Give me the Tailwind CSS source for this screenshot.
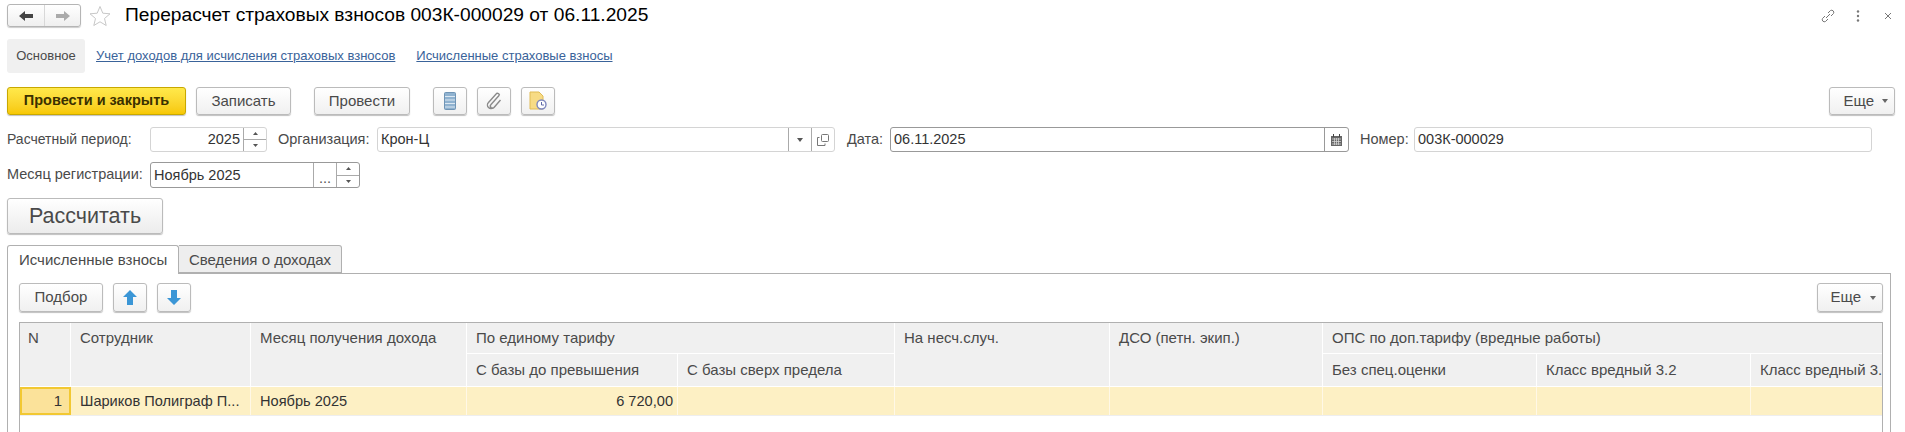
<!DOCTYPE html>
<html lang="ru">
<head>
  <meta charset="UTF-8" />
  <title>Перерасчет страховых взносов</title>
  <script src="https://cdn.jsdelivr.net/npm/@tailwindcss/browser@4"></script>
</head>
<body class="bg-white h-[432px] overflow-hidden font-['Liberation_Sans',Arial,sans-serif] text-[15px] text-[#4a4a4a]">

  <!-- title bar -->
  <div class="flex items-center h-[23px] mt-[4px] pl-[7px] pr-[13px]">
    <div class="flex w-[74px] h-[23px] border border-[#b5b5b5] rounded-[3px] bg-linear-to-b from-white to-[#efefef] shadow-[0_1px_1px_rgba(0,0,0,0.2)]">
      <div class="w-[37px] flex items-center justify-center border-r border-[#d8d8d8]">
        <svg width="14" height="10" viewBox="0 0 14 10"><path d="M0 5 L6 0 V3 H14 V7 H6 V10 Z" fill="#444"/></svg>
      </div>
      <div class="flex-1 flex items-center justify-center">
        <svg width="14" height="10" viewBox="0 0 14 10"><path d="M14 5 L8 0 V3 H0 V7 H8 V10 Z" fill="#aaa"/></svg>
      </div>
    </div>
    <svg class="ml-[8px]" width="22" height="22" viewBox="0 0 22 22"><path d="M11 1.5 L13.8 8.2 L21 8.8 L15.5 13.5 L17.2 20.5 L11 16.8 L4.8 20.5 L6.5 13.5 L1 8.8 L8.2 8.2 Z" fill="none" stroke="#c8c8c8"/></svg>
    <h1 class="ml-[14px] text-[19.2px] text-black whitespace-nowrap">Перерасчет страховых взносов 003К-000029 от 06.11.2025</h1>
    <div class="ml-auto flex items-center">
      <svg width="16" height="16" viewBox="0 0 16 16" fill="none" stroke="#777" stroke-width="1"><path d="M6 10 L10 6"/><path d="M8 5 L10.5 2.5 a2.2 2.2 0 0 1 3 3 L11 8"/><path d="M8 11 L5.5 13.5 a2.2 2.2 0 0 1 -3 -3 L5 8"/></svg>
      <svg class="ml-[20px]" width="4" height="14" viewBox="0 0 4 14" fill="#777"><circle cx="2" cy="2.5" r="1.2"/><circle cx="2" cy="7" r="1.2"/><circle cx="2" cy="11.5" r="1.2"/></svg>
      <svg class="ml-[24px]" width="8" height="8" viewBox="0 0 8 8" stroke="#777"><path d="M1 1 L7 7 M7 1 L1 7"/></svg>
    </div>
  </div>

  <!-- section links -->
  <div class="flex items-center h-[34px] mt-[12px] pl-[7px] text-[13px]">
    <div class="w-[78px] h-full flex items-center justify-center bg-[#f0f0f0] rounded-[3px] text-[#4a4a4a]">Основное</div>
    <a class="ml-[11px] text-[#3a639a] underline whitespace-nowrap">Учет доходов для исчисления страховых взносов</a>
    <a class="ml-[21px] text-[#3a639a] underline whitespace-nowrap">Исчисленные страховые взносы</a>
  </div>

  <!-- command bar -->
  <div class="flex items-center h-[28px] mt-[14px] pl-[7px] pr-[10px]">
    <button class="w-[179px] h-full rounded-[3px] border border-[#c8a800] bg-linear-to-b from-[#ffe94a] to-[#f7c800] font-bold text-[14.5px] text-[#3a3000] shadow-[0_1px_1px_rgba(0,0,0,0.25)]">Провести и закрыть</button>
    <button class="ml-[10px] w-[95px] h-full rounded-[3px] border border-[#bbb] bg-linear-to-b from-white to-[#f0f0f0] shadow-[0_1px_1px_rgba(0,0,0,0.25)]">Записать</button>
    <button class="ml-[23px] w-[96px] h-full rounded-[3px] border border-[#bbb] bg-linear-to-b from-white to-[#f0f0f0] shadow-[0_1px_1px_rgba(0,0,0,0.25)]">Провести</button>
    <button class="ml-[23px] w-[34px] h-full flex items-center justify-center rounded-[3px] border border-[#bbb] bg-linear-to-b from-white to-[#f0f0f0] shadow-[0_1px_1px_rgba(0,0,0,0.25)]">
      <svg width="12" height="18" viewBox="0 0 12 18"><rect x="0.5" y="0.5" width="11" height="17" rx="1" fill="#8fb2d0" stroke="#6f94b5"/><path d="M1 4.5 H11 M1 8 H11 M1 11.5 H11 M1 15 H11" stroke="#dce8f2"/></svg>
    </button>
    <button class="ml-[10px] w-[34px] h-full flex items-center justify-center rounded-[3px] border border-[#bbb] bg-linear-to-b from-white to-[#f0f0f0] shadow-[0_1px_1px_rgba(0,0,0,0.25)]">
      <svg width="16" height="18" viewBox="0 0 16 18" fill="none" stroke="#8a8a8a" stroke-width="1.4"><path d="M13.5 3 L5 12.5 a2.1 2.1 0 0 0 3 3 L14.5 8 M13.5 3 a2.2 2.2 0 0 0 -3 -1.5 L2.5 10.5 a3.4 3.4 0 0 0 5 5"/></svg>
    </button>
    <button class="ml-[10px] w-[34px] h-full flex items-center justify-center rounded-[3px] border border-[#bbb] bg-linear-to-b from-white to-[#f0f0f0] shadow-[0_1px_1px_rgba(0,0,0,0.25)]">
      <svg width="20" height="20" viewBox="0 0 20 20"><path d="M2 1 H11 L15 5 V18 H2 Z" fill="#f7db85" stroke="#e0bb55"/><circle cx="13.5" cy="13.5" r="4.5" fill="#fff" stroke="#7d86bd" stroke-width="1.4"/><path d="M13.5 11 V14 H16" fill="none" stroke="#5f69a8"/></svg>
    </button>
    <button class="ml-auto w-[66px] h-full flex items-center justify-end gap-[8px] pr-[6px] rounded-[3px] border border-[#bbb] bg-linear-to-b from-white to-[#f0f0f0] shadow-[0_1px_1px_rgba(0,0,0,0.25)]">
      Еще
      <svg width="6" height="4" viewBox="0 0 6 4"><path d="M0 0 H6 L3 4 Z" fill="#666"/></svg>
    </button>
  </div>

  <!-- fields, first row -->
  <div class="flex items-center h-[25px] mt-[12px] pl-[7px] text-[14.5px]">
    <label class="w-[143px] text-[14px] whitespace-nowrap">Расчетный период:</label>
    <div class="flex w-[117px] h-full border border-[#d4d4d4] rounded-[3px]">
      <div class="flex-1 text-right pr-[3px] leading-[23px] text-[#333]">2025</div>
      <div class="w-[23px] border-l border-[#aaa] flex flex-col">
        <div class="flex-1 flex items-center justify-center border-b border-[#aaa]"><svg width="5" height="3" viewBox="0 0 5 3"><path d="M0 3 L2.5 0 L5 3 Z" fill="#555"/></svg></div>
        <div class="flex-1 flex items-center justify-center"><svg width="5" height="3" viewBox="0 0 5 3"><path d="M0 0 H5 L2.5 3 Z" fill="#555"/></svg></div>
      </div>
    </div>
    <label class="ml-[11px] w-[99px] whitespace-nowrap">Организация:</label>
    <div class="flex w-[458px] h-full border border-[#d4d4d4] rounded-[3px]">
      <div class="flex-1 pl-[3px] leading-[23px] text-[#333]">Крон-Ц</div>
      <div class="w-[23px] border-l border-[#aaa] flex items-center justify-center"><svg width="6" height="4" viewBox="0 0 6 4"><path d="M0 0 H6 L3 4 Z" fill="#555"/></svg></div>
      <div class="w-[23px] border-l border-[#aaa] flex items-center justify-center">
        <svg width="12" height="12" viewBox="0 0 12 12" fill="none" stroke="#777"><rect x="4.5" y="0.5" width="7" height="7" rx="1"/><path d="M2.5 3.5 H0.5 V11.5 H8 V9.5"/></svg>
      </div>
    </div>
    <label class="ml-[12px] w-[43px] whitespace-nowrap">Дата:</label>
    <div class="flex w-[459px] h-full border border-[#999] rounded-[3px]">
      <div class="flex-1 pl-[3px] leading-[23px] text-[#333]">06.11.2025</div>
      <div class="w-[24px] border-l border-[#999] flex items-center justify-center">
        <svg width="11" height="12" viewBox="0 0 11 12"><path d="M0 2 H11 V12 H0 Z" fill="#666"/><path d="M2.5 0 V3 M8.5 0 V3" stroke="#444"/><path d="M1 5 H10 M1 7.5 H10 M1 10 H10 M3.5 4 V11 M5.5 4 V11 M7.5 4 V11" stroke="#ddd" stroke-width="0.7"/></svg>
      </div>
    </div>
    <label class="ml-[11px] w-[54px] whitespace-nowrap">Номер:</label>
    <div class="w-[458px] h-full border border-[#d4d4d4] rounded-[3px] pl-[3px] leading-[23px] text-[#333]">003К-000029</div>
  </div>

  <!-- fields, second row -->
  <div class="flex items-center h-[26px] mt-[10px] pl-[7px] text-[14.5px]">
    <label class="w-[143px] whitespace-nowrap">Месяц регистрации:</label>
    <div class="flex w-[210px] h-full border border-[#999] rounded-[3px]">
      <div class="flex-1 pl-[3px] leading-[24px] text-[#333]">Ноябрь 2025</div>
      <div class="w-[23px] border-l border-[#aaa] flex items-end justify-center leading-[18px] text-[#555]">...</div>
      <div class="w-[23px] border-l border-[#aaa] flex flex-col">
        <div class="flex-1 flex items-center justify-center border-b border-[#aaa]"><svg width="5" height="3" viewBox="0 0 5 3"><path d="M0 3 L2.5 0 L5 3 Z" fill="#555"/></svg></div>
        <div class="flex-1 flex items-center justify-center"><svg width="5" height="3" viewBox="0 0 5 3"><path d="M0 0 H5 L2.5 3 Z" fill="#555"/></svg></div>
      </div>
    </div>
  </div>

  <div class="pl-[7px] mt-[10px]">
    <button class="w-[156px] h-[36px] rounded-[3px] border border-[#bbb] bg-linear-to-b from-white to-[#ececec] text-[21.5px] shadow-[0_1px_1px_rgba(0,0,0,0.25)]">Рассчитать</button>
  </div>

  <!-- page tabs -->
  <div class="flex h-[29px] mt-[11px] ml-[7px] w-[1884px] border-b border-[#b0b0b0]">
    <div class="relative z-10 w-[172px] h-[29px] pl-[11px] leading-[27px] border border-b-0 border-[#b0b0b0] rounded-t-[3px] bg-white">Исчисленные взносы</div>
    <div class="w-[163px] h-[28px] text-center leading-[27px] border border-l-0 border-[#b0b0b0] rounded-tr-[3px] bg-[#eeeeee]">Сведения о доходах</div>
  </div>

  <!-- page body -->
  <div class="ml-[7px] w-[1884px] h-[158px] border-x border-[#b0b0b0] pl-[11px] pr-[7px] pt-[9px]">
    <div class="flex h-[29px]">
      <button class="w-[84px] h-full rounded-[3px] border border-[#bbb] bg-linear-to-b from-white to-[#f0f0f0] shadow-[0_1px_1px_rgba(0,0,0,0.25)]">Подбор</button>
      <button class="ml-[10px] w-[34px] h-full flex items-center justify-center rounded-[3px] border border-[#bbb] bg-linear-to-b from-white to-[#f0f0f0] shadow-[0_1px_1px_rgba(0,0,0,0.25)]">
        <svg width="14" height="15" viewBox="0 0 14 15"><path d="M7 0 L14 7 H10 V15 H4 V7 H0 Z" fill="#3b96d6"/></svg>
      </button>
      <button class="ml-[10px] w-[34px] h-full flex items-center justify-center rounded-[3px] border border-[#bbb] bg-linear-to-b from-white to-[#f0f0f0] shadow-[0_1px_1px_rgba(0,0,0,0.25)]">
        <svg width="14" height="15" viewBox="0 0 14 15"><path d="M7 15 L14 8 H10 V0 H4 V8 H0 Z" fill="#3b96d6"/></svg>
      </button>
      <button class="ml-auto w-[66px] h-full flex items-center justify-end gap-[9px] pr-[6px] rounded-[3px] border border-[#bbb] bg-linear-to-b from-white to-[#f0f0f0] shadow-[0_1px_1px_rgba(0,0,0,0.25)]">
        Еще
        <svg width="6" height="4" viewBox="0 0 6 4"><path d="M0 0 H6 L3 4 Z" fill="#666"/></svg>
      </button>
    </div>

    <!-- table -->
    <div class="mt-[10px] h-[110px] border-x border-t border-[#b0b0b0] overflow-hidden">
      <div class="grid grid-cols-[51px_180px_216px_211px_217px_215px_213px_214px_214px_214px] grid-rows-[31px_33px_28px] w-[1945px] gap-0 bg-[#f0f0f0]">
        <div class="row-span-2 pl-[8px] pt-[4px] border-r border-b border-white">N</div>
        <div class="row-span-2 pl-[9px] pt-[4px] border-r border-b border-white">Сотрудник</div>
        <div class="row-span-2 pl-[9px] pt-[4px] border-r border-b border-white">Месяц получения дохода</div>
        <div class="col-span-2 pl-[9px] pt-[4px] border-r border-b border-white">По единому тарифу</div>
        <div class="row-span-2 pl-[9px] pt-[4px] border-r border-b border-white">На несч.случ.</div>
        <div class="row-span-2 pl-[9px] pt-[4px] border-r border-b border-white">ДСО (петн. экип.)</div>
        <div class="col-span-3 pl-[9px] pt-[4px] border-b border-white">ОПС по доп.тарифу (вредные работы)</div>
        <div class="pl-[9px] pt-[5px] border-r border-b border-white whitespace-nowrap">С базы до превышения</div>
        <div class="pl-[9px] pt-[5px] border-r border-b border-white whitespace-nowrap">С базы сверх предела</div>
        <div class="pl-[9px] pt-[5px] border-r border-b border-white whitespace-nowrap">Без спец.оценки</div>
        <div class="pl-[9px] pt-[5px] border-r border-b border-white whitespace-nowrap">Класс вредный 3.2</div>
        <div class="pl-[9px] pt-[5px] border-r border-b border-white whitespace-nowrap">Класс вредный 3.3</div>

        <div class="bg-[#fbe29a] border-2 border-[#f2c832] text-right pr-[7px] leading-[24px] text-[#333]">1</div>
        <div class="bg-[#fdf0c4] border-r border-[#fff8e6] pl-[9px] text-[14.6px] leading-[28px] text-[#333] whitespace-nowrap overflow-hidden">Шариков Полиграф П...</div>
        <div class="bg-[#fdf0c4] border-r border-[#fff8e6] pl-[9px] text-[14.6px] leading-[28px] text-[#333]">Ноябрь 2025</div>
        <div class="bg-[#fdf0c4] border-r border-[#fff8e6] pr-[4px] text-right text-[14.6px] leading-[28px] text-[#333]">6 720,00</div>
        <div class="bg-[#fdf0c4] border-r border-[#fff8e6]"></div>
        <div class="bg-[#fdf0c4] border-r border-[#fff8e6]"></div>
        <div class="bg-[#fdf0c4] border-r border-[#fff8e6]"></div>
        <div class="bg-[#fdf0c4] border-r border-[#fff8e6]"></div>
        <div class="bg-[#fdf0c4] border-r border-[#fff8e6]"></div>
        <div class="bg-[#fdf0c4] border-r border-[#fff8e6]"></div>
      </div>
      <div class="border-t border-[#eee]"></div>
    </div>
  </div>
</body>
</html>
